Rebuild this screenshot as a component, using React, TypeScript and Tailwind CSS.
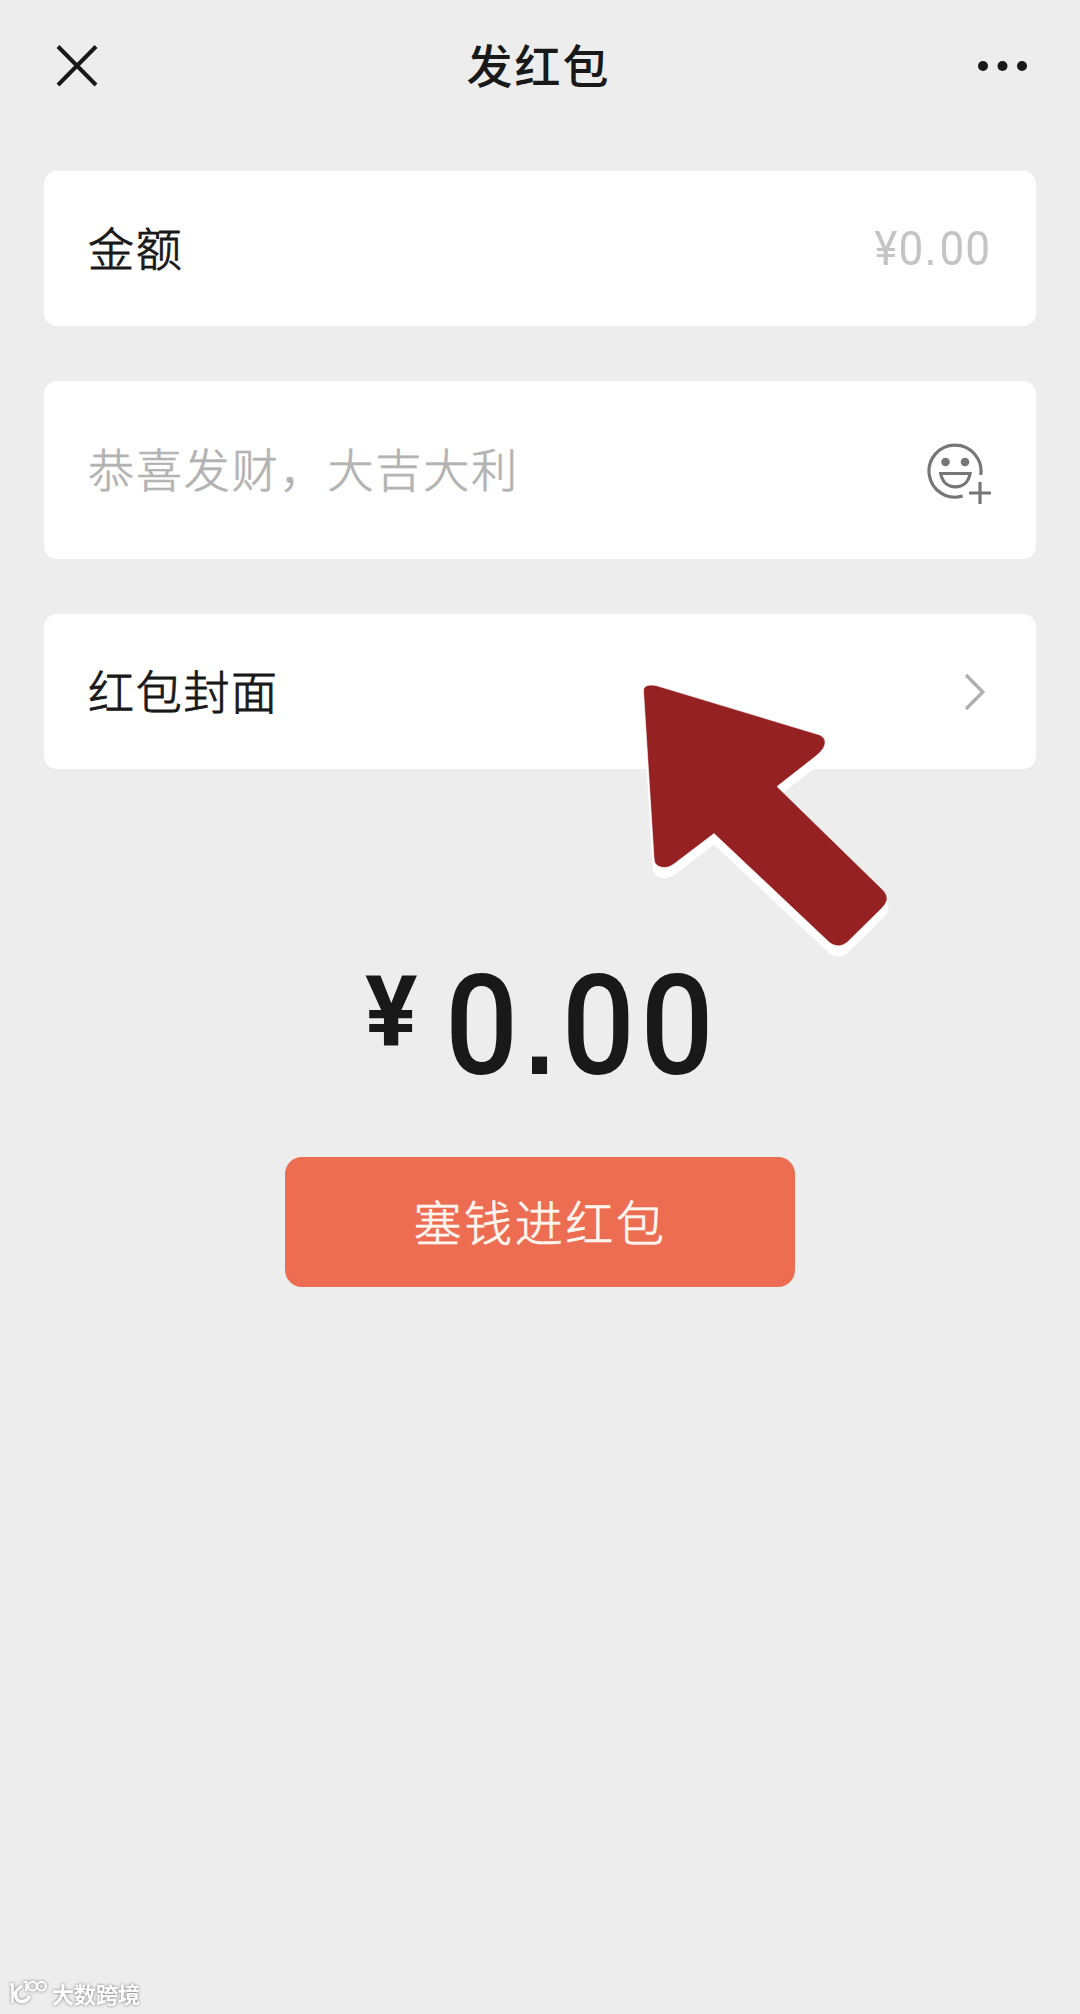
import type { ReactNode } from 'react';

function CloseIcon() {
  return (
    <svg width="44" height="44" viewBox="0 0 44 44" fill="none" stroke="#191919" strokeWidth="4">
      <path d="M3 2.500L41 41M41 2.500L3 41" />
    </svg>
  );
}

function MoreIcon() {
  return (
    <svg width="50" height="12" viewBox="0 0 50 12" fill="#191919">
      <circle cx="6" cy="6" r="5" />
      <circle cx="25.5" cy="6" r="5" />
      <circle cx="45" cy="6" r="5" />
    </svg>
  );
}

function EmojiAddIcon() {
  return (
    <svg width="64" height="62" viewBox="0 0 64 62" fill="none" stroke="#767676" strokeWidth="3.2">
      <path d="M35.600 54A26 26 0 1 1 53.700 33" />
      <circle cx="18.500" cy="20" r="4.300" fill="#767676" stroke="none" />
      <circle cx="38" cy="20" r="4.300" fill="#767676" stroke="none" />
      <path d="M13.700 31.500H43.100C41.500 40.500 35.500 44.800 28.400 44.800S15.300 40.500 13.700 31.500Z" />
      <path d="M42 51H64M53 40V62" />
    </svg>
  );
}

function ChevronIcon() {
  return (
    <svg width="22" height="38" viewBox="0 0 22 38" fill="none" stroke="#b0b0b0" strokeWidth="3.4">
      <path d="M2 2L18.800 19L2 36" />
    </svg>
  );
}

const ARROW_PATH =
  'M3.500 11Q3 5.500 11 5L16 5.500L180 55Q188 59 183.500 68Q181 72 176 76L137 106.500L243 210Q248 215 247 220Q246 224 242 228L207 262.500Q199 269 190 263L74 153.500L34 184Q26 190 18 186Q14 184 14 178Z';

function PointerArrow() {
  return (
    <svg width="260" height="285" viewBox="0 0 260 285" strokeLinejoin="round">
      <path d={ARROW_PATH} transform="translate(0 9.500)" fill="#fff" stroke="#fff" strokeWidth="2.400" />
      <path d={ARROW_PATH} fill="#962122" stroke="#fff" strokeOpacity="0.6" strokeWidth="1" />
    </svg>
  );
}

function Watermark() {
  return (
    <div className="absolute bottom-[7px] left-2 flex items-center gap-1 text-white drop-shadow-[0_0_1.500px_rgba(0,0,0,0.5)]">
      <svg width="40" height="28" viewBox="0 0 40 28" fill="none" stroke="currentColor">
        <path d="M2 5.500H4.500V24M14 6.500L7 13" strokeWidth="2.600" />
        <path d="M7.500 12.500C6.500 19 10 22.500 14 22.500C17.500 22.500 20 20.500 21.500 17" strokeWidth="3.400" />
        <path d="M15.500 3H18.500V12" strokeWidth="2.200" />
        <circle cx="24.500" cy="7.200" r="4.300" strokeWidth="2.200" />
        <circle cx="33.500" cy="7.200" r="4.300" strokeWidth="2.200" />
      </svg>
      <span className="text-[22px] font-bold leading-7">大数跨境</span>
    </div>
  );
}

function Card({ className, children }: { className: string; children: ReactNode }) {
  return (
    <div className={`flex items-center justify-between rounded-[13px] bg-white pl-11 ${className}`}>
      {children}
    </div>
  );
}

function Label({ children }: { children: ReactNode }) {
  return (
    <span className="pb-1.5 text-[46px] font-light leading-none tracking-[1.700px] [-webkit-text-stroke:0.9px_#191919]">
      {children}
    </span>
  );
}

export default function App() {
  return (
    <div className="relative flex h-[2014px] w-[1080px] flex-col overflow-hidden bg-[#ededed] font-['Noto_Sans_CJK_SC',sans-serif] text-[#191919]">
      <header className="grid h-[131px] grid-cols-3 items-center pl-[55px] pr-[53px]">
        <button aria-label="关闭" className="justify-self-start">
          <CloseIcon />
        </button>
        <h1 className="justify-self-center pb-1.5 pr-[5px] text-[46px] font-medium leading-none tracking-[2px]">
          发红包
        </h1>
        <button aria-label="更多" className="justify-self-end">
          <MoreIcon />
        </button>
      </header>

      <main className="flex flex-col px-11 pt-10">
        <Card className="h-[155px] pr-[45px]">
          <Label>金额</Label>
          <span className="origin-right scale-x-[0.92] font-[Roboto,sans-serif] text-[48px] leading-none tracking-[1.200px] text-[#c4c4c4]">
            ¥0<span className="font-['Liberation_Sans',sans-serif] text-[46px] tracking-[3.500px]">.</span>00
          </span>
        </Card>

        <Card className="mt-[55px] h-[178px] pr-[45px]">
          <span className="pb-1.5 text-[46px] font-light leading-none tracking-[1.900px] text-[#b3b3b3] [-webkit-text-stroke:0.7px_#b3b3b3]">
            恭喜发财，大吉大利
          </span>
          <div className="pt-1.5">
            <EmojiAddIcon />
          </div>
        </Card>

        <Card className="mt-[55px] h-[155px] pr-[50px]">
          <Label>红包封面</Label>
          <ChevronIcon />
        </Card>

        <div className="mt-[187px] flex h-[140px] items-start pl-[321px] font-[Roboto,sans-serif] leading-none">
          <span className="w-20 pt-2 text-[98px] font-bold">¥</span>
          <span className="origin-left scale-x-[0.92] whitespace-nowrap text-[140px] font-medium tracking-[6px]">
            0<span className="pl-px font-['Liberation_Sans',sans-serif] text-[116px] font-bold leading-none tracking-[8px]">.</span>00
          </span>
        </div>

        <button className="mt-[61px] flex h-[130px] w-[510px] items-center justify-center self-center rounded-[17px] bg-[#ec6d51] pb-1 text-[48px] font-light leading-none tracking-[2.600px] text-[#fff5f0] [-webkit-text-stroke:0.7px_#fff5f0]">
          塞钱进红包
        </button>
      </main>

      <div className="pointer-events-none absolute left-[640px] top-[680px]">
        <PointerArrow />
      </div>

      <Watermark />
    </div>
  );
}
